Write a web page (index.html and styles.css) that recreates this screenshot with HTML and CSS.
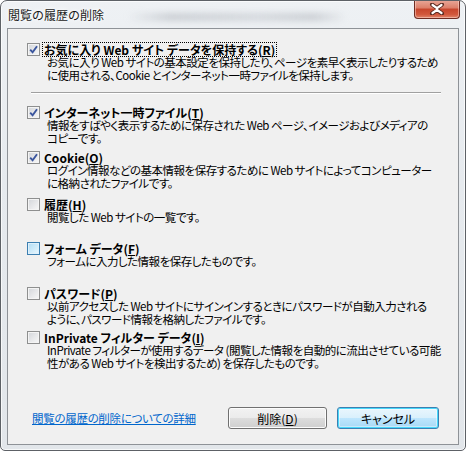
FILE: index.html
```html
<!DOCTYPE html>
<html lang="ja">
<head>
<meta charset="utf-8">
<title>閲覧の履歴の削除</title>
<link rel="stylesheet" href="styles.css">
</head>
<body>
<div class="window">
  <div class="titlebar">
    <span class="title">閲覧の履歴の削除</span>
    <span class="blur-bg"></span>
    <div class="close">
      <svg width="16" height="12" viewBox="0 0 16 12">
        <path d="M3 1.5 L8 5 L13 1.5 M3 10.5 L8 7 L13 10.5" fill="none" stroke="#5a2a20" stroke-width="4" stroke-linecap="round"/>
        <path d="M3.5 2 L8 5.2 L12.5 2 M3.5 10 L8 6.8 L12.5 10 M8 5.2 L8 6.8" fill="none" stroke="#ffffff" stroke-width="2.2" stroke-linecap="round"/>
      </svg>
    </div>
  </div>
  <div class="client">
    <div class="item item-1">
      <div class="row"><span class="cb checked"></span><span class="label focus">お気に入り Web サイト データを保持する(<u>R</u>)</span></div>
      <div class="desc">お気に入り Web サイトの基本設定を保持したり、ページを素早く表示したりするため<br>に使用される、Cookie とインターネット一時ファイルを保持します。</div>
    </div>
    <div class="sep"></div>
    <div class="item item-2">
      <div class="row"><span class="cb checked"></span><span class="label">インターネット一時ファイル(<u>T</u>)</span></div>
      <div class="desc">情報をすばやく表示するために保存された Web ページ、イメージおよびメディアの<br>コピーです。</div>
    </div>
    <div class="item item-3">
      <div class="row"><span class="cb checked"></span><span class="label">Cookie(<u>O</u>)</span></div>
      <div class="desc">ログイン情報などの基本情報を保存するために Web サイトによってコンピューター<br>に格納されたファイルです。</div>
    </div>
    <div class="item item-4">
      <div class="row"><span class="cb"></span><span class="label">履歴(<u>H</u>)</span></div>
      <div class="desc">閲覧した Web サイトの一覧です。</div>
    </div>
    <div class="item item-5">
      <div class="row"><span class="cb hover"></span><span class="label">フォーム データ(<u>F</u>)</span></div>
      <div class="desc">フォームに入力した情報を保存したものです。</div>
    </div>
    <div class="item item-6">
      <div class="row"><span class="cb"></span><span class="label">パスワード(<u>P</u>)</span></div>
      <div class="desc">以前アクセスした Web サイトにサインインするときにパスワードが自動入力される<br>ように、パスワード情報を格納したファイルです。</div>
    </div>
    <div class="item item-7">
      <div class="row"><span class="cb"></span><span class="label">InPrivate フィルター データ(<u>I</u>)</span></div>
      <div class="desc">InPrivate フィルターが使用するデータ (閲覧した情報を自動的に流出させている可能<br>性がある Web サイトを検出するため) を保存したものです。</div>
    </div>
    <div class="footer">
      <a class="link" href="#">閲覧の履歴の削除についての詳細</a>
      <div class="buttons">
        <button class="btn btn-delete">削除(<u>D</u>)</button>
        <button class="btn btn-default">キャンセル</button>
      </div>
    </div>
  </div>
</div>
</body>
</html>
```

FILE: styles.css
```css
html, body {
  margin: 0;
  padding: 0;
  background: #ffffff;
}

body {
  font-family: "Noto Sans CJK JP", "Liberation Sans", sans-serif;
  font-size: 12px;
  color: #000;
}

.window {
  position: relative;
  box-sizing: border-box;
  width: 466px;
  height: 451px;
  border: 1px solid #5d6166;
  border-radius: 7px 7px 5px 5px;
  padding: 0 6px 5px 6px;
  background: linear-gradient(180deg, #eef1f4 0%, #e6eaee 40%, #e2e6ea 100%);
  box-shadow: inset 0 0 0 1px rgba(255,255,255,0.7);
  display: flex;
  flex-direction: column;
  overflow: hidden;
}

.titlebar {
  position: relative;
  height: 27px;
  flex: none;
}

.title {
  position: relative;
  z-index: 1;
  display: block;
  padding-left: 1px;
  line-height: 27px;
  font-size: 12px;
  color: #1a1a1a;
  text-shadow: 0 0 6px #ffffff, 0 0 3px #ffffff;
}

.blur-bg {
  position: absolute;
  left: 120px;
  top: 12px;
  width: 220px;
  height: 8px;
  background: linear-gradient(90deg, rgba(170,175,182,0) 0%, rgba(170,175,182,0.5) 20%, rgba(170,175,182,0.35) 60%, rgba(170,175,182,0.5) 85%, rgba(170,175,182,0) 100%);
  filter: blur(3px);
}

.close {
  position: absolute;
  top: -1px;
  right: -1px;
  width: 46px;
  height: 19px;
  box-sizing: border-box;
  border: 1px solid #6e2c22;
  border-top: none;
  border-radius: 0 0 4px 4px;
  background: linear-gradient(180deg, #e9a99a 0%, #dc7e68 45%, #c7452c 50%, #d2583c 80%, #e0866c 100%);
  box-shadow: inset 0 0 0 1px rgba(255,220,210,0.5);
  display: flex;
  align-items: center;
  justify-content: center;
}

.client {
  box-sizing: border-box;
  flex: 1;
  border: 1px solid #8e9297;
  background: #f0f0f0;
  padding: 13px 0 0 19px;
  display: flex;
  flex-direction: column;
}

.item {
  flex: none;
}

.row {
  display: flex;
  align-items: center;
  height: 14px;
}

.cb {
  box-sizing: border-box;
  width: 13px;
  height: 13px;
  flex: none;
  border: 1px solid #8e8f8f;
  background: linear-gradient(135deg, #d2d5d9 0%, #e6e7e9 50%, #f8f8f8 100%);
  box-shadow: inset 0 0 0 1px #f4f4f4;
  position: relative;
}

.cb.checked::after {
  content: "";
  position: absolute;
  left: 1px;
  top: 1px;
  width: 9px;
  height: 9px;
  background-image: url("data:image/svg+xml;utf8,<svg xmlns='http://www.w3.org/2000/svg' width='9' height='9' viewBox='0 0 9 9'><path d='M1.2 4.6 L3.6 7.3 L8 1.2' fill='none' stroke='%233b569e' stroke-width='1.9'/></svg>");
}

.cb.hover {
  border-color: #3c7fb1;
  background: linear-gradient(135deg, #b1dcf5 0%, #cdeaf9 50%, #eaf7fe 100%);
  box-shadow: inset 0 0 0 1px #def0fb;
}

.label {
  margin-left: 2px;
  padding: 0 1px;
  font-weight: 700;
  line-height: 13px;
  white-space: nowrap;
  font-feature-settings: "palt";
  border: 1px dotted transparent;
}

.label.focus {
  border-color: #000;
}

.desc {
  margin-left: 20px;
  line-height: 13px;
  font-size: 11.5px;
  letter-spacing: -0.5px;
  white-space: nowrap;
  font-feature-settings: "palt";
}

.sep {
  flex: none;
  margin: 10px 17px 0 4px;
  border-top: 1px solid #a0a0a0;
  border-bottom: 1px solid #ffffff;
}

.item-2 { margin-top: 11px; }
.item-3 { margin-top: 5px; }
.item-4 { margin-top: 7px; }
.item-5 { margin-top: 17px; }
.item-6 { margin-top: 18px; }
.item-7 { margin-top: 4px; }

.footer {
  margin-top: auto;
  margin-bottom: 15px;
  margin-right: 19px;
  display: flex;
  align-items: center;
  justify-content: space-between;
}

.link {
  margin-left: 5px;
  color: #0066cc;
  text-decoration: underline;
  font-size: 11.5px;
  letter-spacing: -0.3px;
  font-feature-settings: "palt";
  white-space: nowrap;
}

.buttons {
  display: flex;
  gap: 10px;
}

.btn {
  box-sizing: border-box;
  height: 22px;
  padding: 0;
  font-family: "Noto Sans CJK JP", "Liberation Sans", sans-serif;
  font-size: 12px;
  font-feature-settings: "palt";
  color: #000;
  border: 1px solid #707070;
  border-radius: 3px;
  background: linear-gradient(180deg, #f2f2f2 0%, #ebebeb 50%, #dddddd 51%, #cfcfcf 100%);
  box-shadow: inset 0 0 0 1px #fcfcfc;
}

.btn-delete {
  width: 99px;
}

.btn-default {
  width: 102px;
  border-color: #3c7fb1;
  background: linear-gradient(180deg, #eaf6fd 0%, #d9f0fc 50%, #bee6fd 51%, #a7d9f5 100%);
  box-shadow: inset 0 0 0 1px #48d8fb, inset 0 0 0 2px rgba(255,255,255,0.4);
}
```
